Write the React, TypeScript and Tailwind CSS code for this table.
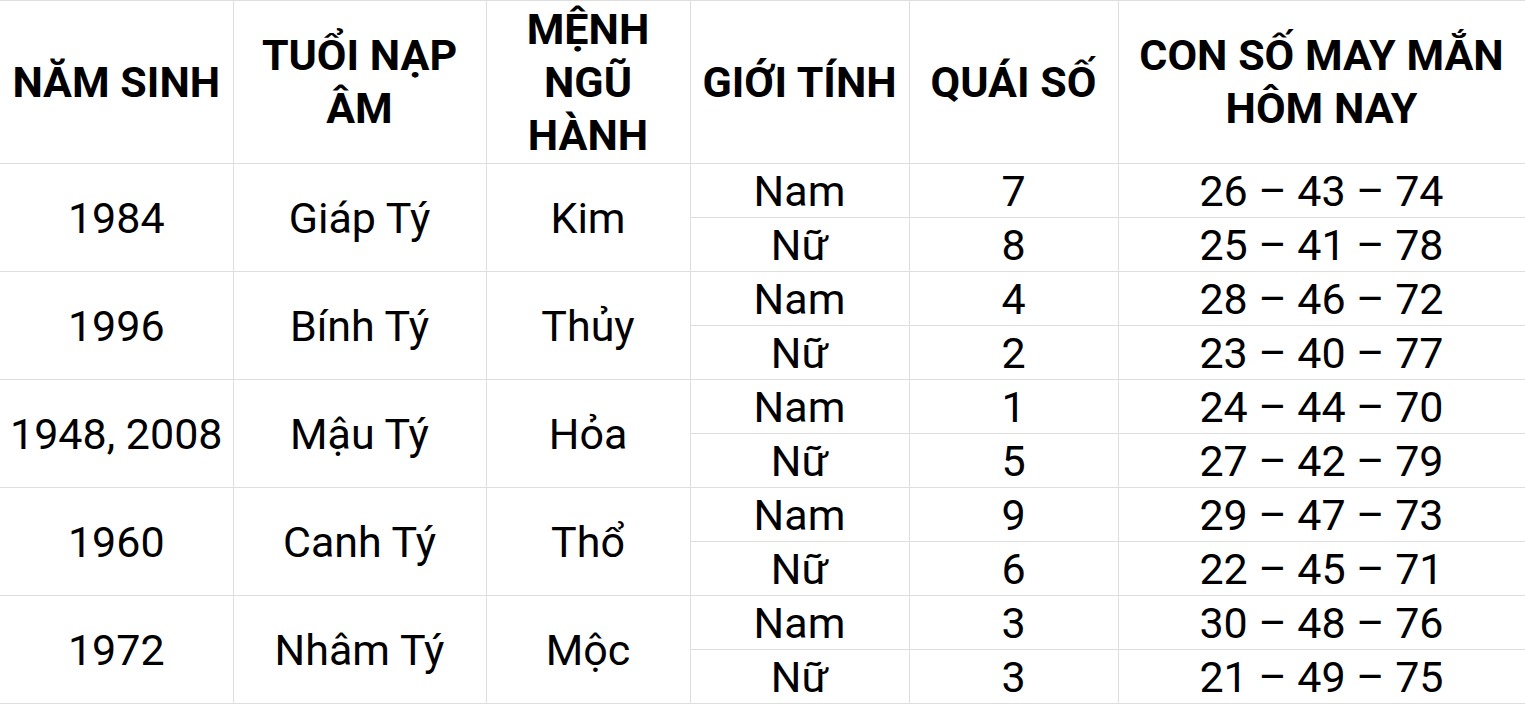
import React from 'react';

type Row = { year: string; napAm: string; menh: string; nam: [string, string]; nu: [string, string] };

const rows: Row[] = [
  { year: '1984', napAm: 'Giáp Tý', menh: 'Kim', nam: ['7', '26 – 43 – 74'], nu: ['8', '25 – 41 – 78'] },
  { year: '1996', napAm: 'Bính Tý', menh: 'Thủy', nam: ['4', '28 – 46 – 72'], nu: ['2', '23 – 40 – 77'] },
  { year: '1948, 2008', napAm: 'Mậu Tý', menh: 'Hỏa', nam: ['1', '24 – 44 – 70'], nu: ['5', '27 – 42 – 79'] },
  { year: '1960', napAm: 'Canh Tý', menh: 'Thổ', nam: ['9', '29 – 47 – 73'], nu: ['6', '22 – 45 – 71'] },
  { year: '1972', napAm: 'Nhâm Tý', menh: 'Mộc', nam: ['3', '30 – 48 – 76'], nu: ['3', '21 – 49 – 75'] },
];

const cell = 'border border-[#dedede] text-center align-middle p-0';

export default function App() {
  return (
    <div className="w-[1525px] h-[705px] bg-white overflow-hidden font-['Roboto',sans-serif] text-black">
      <table className="w-[1525px] table-fixed border-collapse border-l-0">
        <colgroup>
          <col className="w-[233px]" />
          <col className="w-[253px]" />
          <col className="w-[204px]" />
          <col className="w-[219px]" />
          <col className="w-[209px]" />
          <col className="w-[407px]" />
        </colgroup>
        <thead>
          <tr className="h-[163px] text-[43px] font-bold leading-[53px]">
            <th className={`${cell} border-l-0`}>NĂM SINH</th>
            <th className={cell}>TUỔI NẠP<br />ÂM</th>
            <th className={cell}>MỆNH<br />NGŨ<br />HÀNH</th>
            <th className={cell}>GIỚI TÍNH</th>
            <th className={cell}>QUÁI SỐ</th>
            <th className={cell}>CON SỐ MAY MẮN<br />HÔM NAY</th>
          </tr>
        </thead>
        <tbody className="text-[43px] leading-[50px]">
          {rows.map(r => (
            <React.Fragment key={r.year}>
              <tr className="h-[54px]">
                <td rowSpan={2} className={`${cell} border-l-0`}>{r.year}</td>
                <td rowSpan={2} className={cell}>{r.napAm}</td>
                <td rowSpan={2} className={cell}>{r.menh}</td>
                <td className={cell}>Nam</td>
                <td className={cell}>{r.nam[0]}</td>
                <td className={cell}>{r.nam[1]}</td>
              </tr>
              <tr className="h-[54px]">
                <td className={cell}>Nữ</td>
                <td className={cell}>{r.nu[0]}</td>
                <td className={cell}>{r.nu[1]}</td>
              </tr>
            </React.Fragment>
          ))}
        </tbody>
      </table>
    </div>
  );
}
